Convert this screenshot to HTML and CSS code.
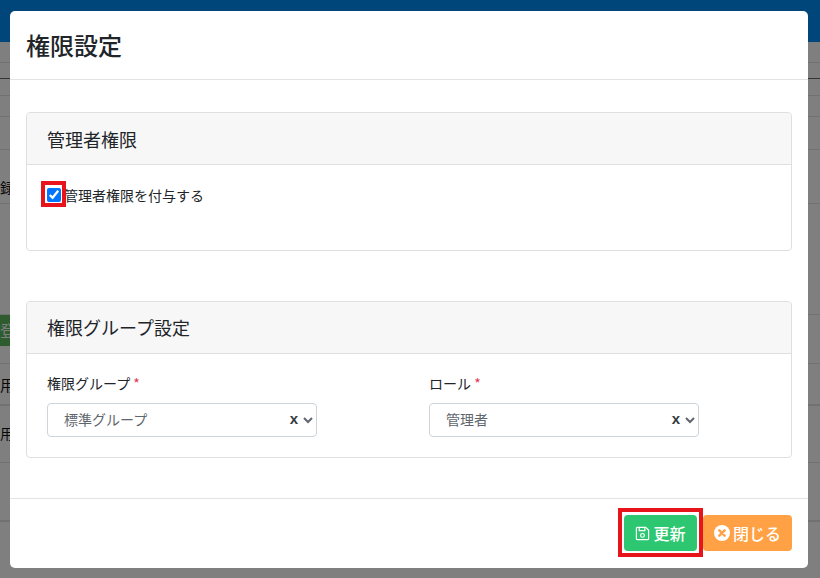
FILE: index.html
```html
<!DOCTYPE html>
<html lang="ja">
<head>
<meta charset="utf-8">
<title>権限設定</title>
<link rel="stylesheet" href="styles.css">
</head>
<body>
<div class="page">
  <div class="navbar"></div>
  <div class="row r1"></div>
  <div class="row r2"></div>
  <div class="row r3"></div>
  <div class="row r4"></div>
  <div class="row r5"></div>
  <div class="row r6"><span>録</span></div>
  <div class="row r7"></div>
  <div class="row r8"><span class="tag">登</span></div>
  <div class="row r9"><span>用</span></div>
  <div class="row r10"><span>用</span></div>
  <div class="row r11"></div>
  <div class="row r12"></div>
</div>
<div class="backdrop"></div>
<div class="modal">
  <header class="modal-header"><h1>権限設定</h1></header>
  <main class="modal-body">
    <section class="card card-admin">
      <h2 class="card-header">管理者権限</h2>
      <div class="card-body">
        <label class="check">
          <span class="mark"><input type="checkbox" checked></span>
          <span>管理者権限を付与する</span>
        </label>
      </div>
    </section>
    <section class="card card-group">
      <h2 class="card-header">権限グループ設定</h2>
      <div class="card-body fields">
        <div class="field">
          <label class="field-label">権限グループ <span class="req">*</span></label>
          <div class="select-wrap">
            <select><option>標準グループ</option></select>
            <span class="clear">x</span>
          </div>
        </div>
        <div class="field">
          <label class="field-label">ロール <span class="req">*</span></label>
          <div class="select-wrap">
            <select><option>管理者</option></select>
            <span class="clear">x</span>
          </div>
        </div>
      </div>
    </section>
  </main>
  <footer class="modal-footer">
    <button class="btn btn-save" type="button">
      <svg class="icon" viewBox="0 0 16 16" width="15" height="15" fill="none" stroke="#fff" stroke-width="1.3" stroke-linejoin="round"><path d="M1.5 2.5a1 1 0 0 1 1-1h9l3 3v9a1 1 0 0 1-1 1h-11a1 1 0 0 1-1-1z"/><path d="M4.5 1.5v3.5h6v-3.5"/><circle cx="8" cy="10" r="2"/></svg>
      <span>更新</span>
    </button>
    <button class="btn btn-close" type="button">
      <svg class="icon" viewBox="0 0 16 16" width="16" height="16"><circle cx="8" cy="8" r="8" fill="#fff"/><path d="M5.3 5.3l5.4 5.4M10.7 5.3l-5.4 5.4" stroke="#ffa144" stroke-width="2.4" stroke-linecap="round"/></svg>
      <span>閉じる</span>
    </button>
  </footer>
</div>
</body>
</html>
```

FILE: styles.css
```css
*, *::before, *::after { box-sizing: border-box; }
html, body { margin: 0; height: 578px; overflow: hidden; }
body {
  position: relative;
  background: #fff;
  font-family: "Noto Sans CJK JP", "Noto Sans", sans-serif;
  color: #212529;
  font-size: 14px;
}
.page { height: 578px; overflow: hidden; }
.navbar { height: 42px; background: #008cf5; }
.row { border-bottom: 1px solid #dee2e6; display: flex; align-items: center; font-size: 14px; color: #111; overflow: hidden; }
.r1 { height: 21px; }
.r2 { height: 16px; border-bottom-color: #666; }
.r3 { height: 17px; }
.r4 { height: 21px; }
.r5 { height: 33px; }
.r6 { height: 54px; align-items: flex-end; padding-bottom: 6px; }
.r7 { height: 111px; }
.r8 { height: 49px; align-items: flex-start; }
.r9 { height: 42px; border-bottom-width: 2px; font-size: 15px; }
.r10 { height: 57px; padding-bottom: 3px; }
.r11 { height: 58px; }
.row span { display: block; }
.tag { background: #5cb85c; color: #fff; width: 60px; height: 32px; line-height: 32px; font-size: 16px; margin-top: -1px; }
.backdrop { position: absolute; inset: 0; background: rgba(0, 0, 0, .5); }
.modal {
  position: absolute;
  left: 10px;
  top: 11px;
  width: 798px;
  height: 557px;
  background: #fff;
  border-radius: 5px;
  display: flex;
  flex-direction: column;
}
.modal-header { height: 69px; padding: 0 16px; display: flex; align-items: center; border-bottom: 1px solid #e3e3e3; flex: none; }
.modal-header h1 { margin: 0; font-size: 24px; font-weight: 500; color: #212529; line-height: 1.2; }
.modal-body { flex: 1; padding: 32px 16px 0; display: flex; flex-direction: column; gap: 50px; }
.card { border: 1px solid #dfdfdf; border-radius: 4px; }
.card-admin { height: 139px; }
.card-group { height: 157px; }
.card-header { margin: 0; height: 52px; padding: 0 20px; display: flex; align-items: center; background: #f7f7f7; border-bottom: 1px solid #dfdfdf; border-radius: 4px 4px 0 0; font-size: 18px; font-weight: 400; color: #212529; }
.card-group .card-header { padding-bottom: 2px; }
.card-body { padding: 0 20px; }
.check { display: flex; align-items: center; gap: 4px; margin-top: 19px; font-size: 14px; height: 22px; }
.mark { position: relative; width: 13px; height: 14px; display: block; }
.mark::after { content: ""; position: absolute; left: -6px; top: -7px; width: 25px; height: 26px; border: 4px solid #e8141c; }
.mark input { margin: 0; width: 14px; height: 14px; display: block; accent-color: #0075ff; }
.fields { display: flex; gap: 112px; padding-top: 19px; }
.field { width: 270px; }
.field-label { display: block; font-size: 14px; line-height: 21px; margin-bottom: 9px; }
.req { color: #e8344e; }
.select-wrap { position: relative; height: 34px; }
.select-wrap select {
  width: 100%;
  height: 34px;
  padding: 0 0 2px 12px;
  border: 1px solid #ced4da;
  border-radius: 4px;
  background: #fff;
  color: #5f666d;
  font-family: inherit;
  font-size: 14px;
}
.clear { position: absolute; right: 19px; top: 6px; font-family: "Liberation Sans", sans-serif; font-weight: 700; font-size: 15px; color: #343a40; line-height: 20px; pointer-events: none; }
.modal-footer { height: 70px; flex: none; border-top: 1px solid #e3e3e3; padding: 16px 16px 0 0; display: flex; justify-content: flex-end; align-items: flex-start; gap: 6px; }
.btn { height: 36px; border: 0; border-radius: 4px; color: #fff; font-family: inherit; font-size: 16px; font-weight: 500; display: inline-flex; align-items: center; justify-content: center; gap: 3px; padding: 0; position: relative; }
.btn-save { width: 73px; background: #2dc771; }
.btn-save::after { content: ""; position: absolute; left: -6px; top: -7px; width: 85px; height: 49px; border: 4px solid #e8141c; pointer-events: none; }
.btn-close { width: 89px; background: #ffa144; }
```
